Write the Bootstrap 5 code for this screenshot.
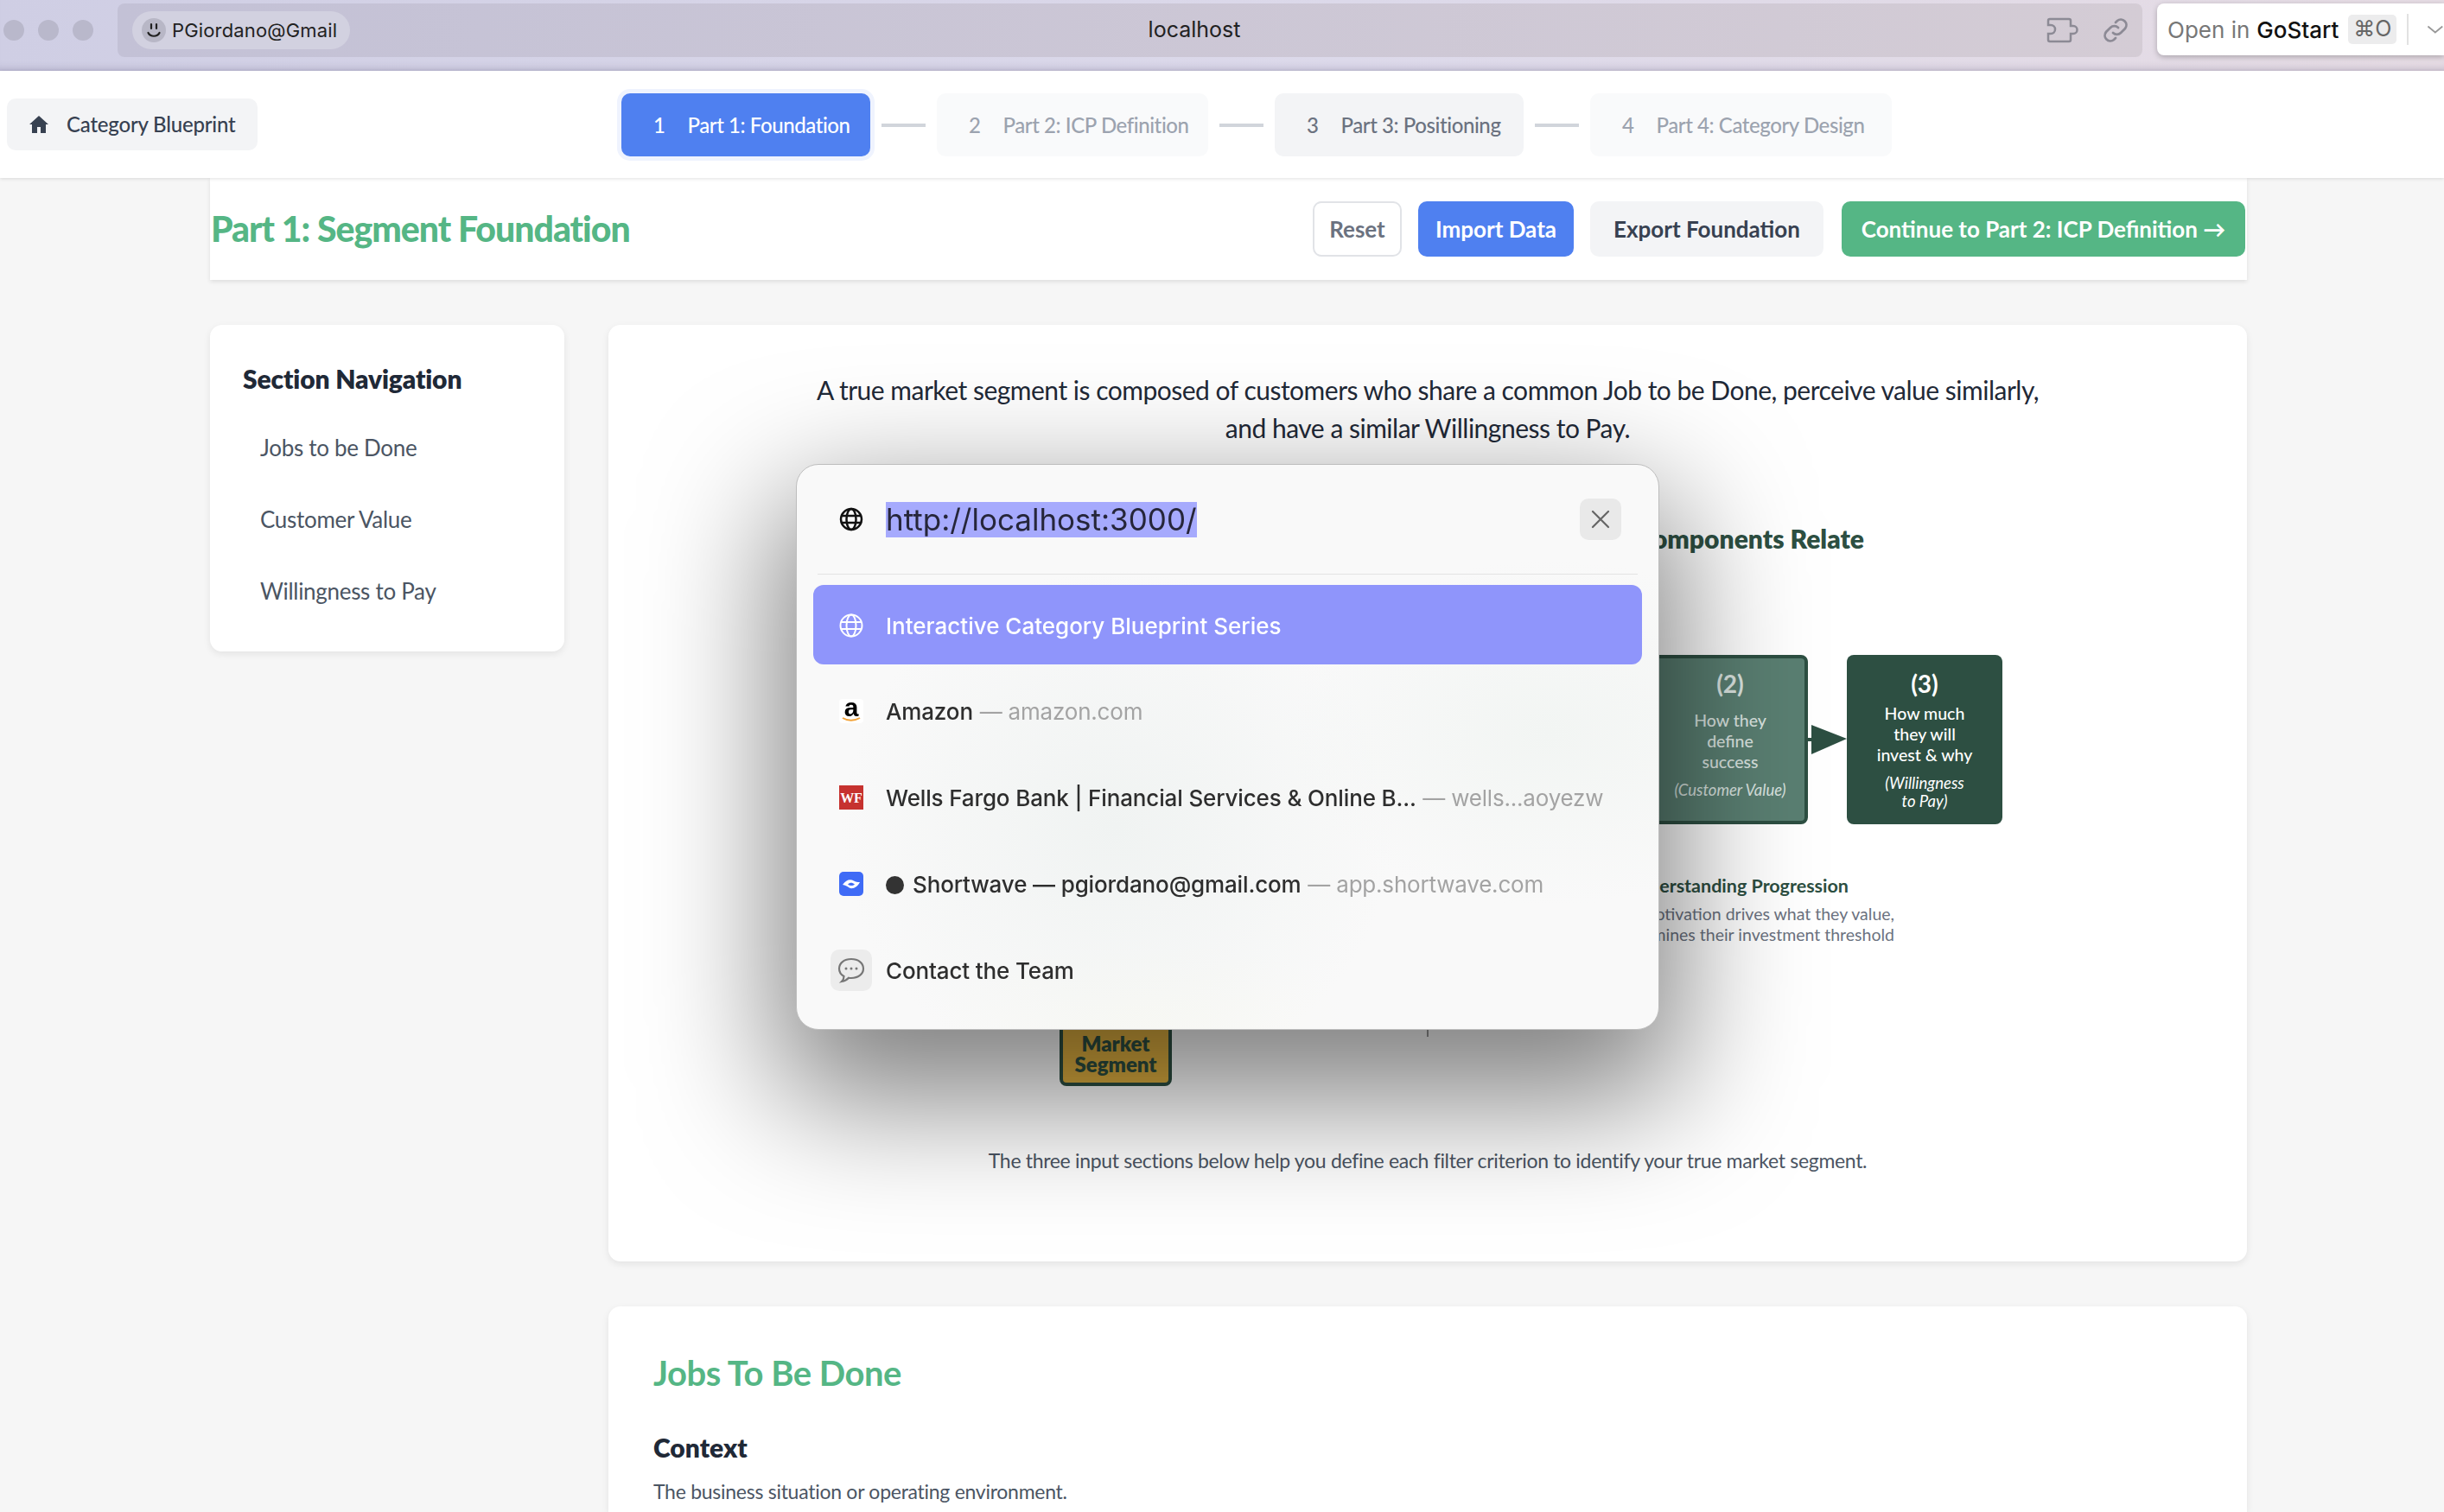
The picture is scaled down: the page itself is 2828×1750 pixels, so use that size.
<!DOCTYPE html>
<html lang="en">
<head>
<meta charset="UTF-8">
<title>Interactive Category Blueprint Series</title>
<link href="https://cdn.jsdelivr.net/npm/bootstrap@5.3.0/dist/css/bootstrap.min.css" rel="stylesheet">
<style>
html, body { height: 100%; overflow: hidden; }
body { background: #f6f6f6; font-family: Lato, "Open Sans", sans-serif; color: #1f2937; }

/* browser chrome */
.chrome-bar { height: 82px; background: linear-gradient(90deg, #cfcee4 0%, #dcd9ea 55%, #e6dce4 100%); box-shadow: inset 0 -10px 8px -8px rgba(80,70,110,.25); padding: 4px 0 0 4px; }
.light-dot { width: 24px; height: 24px; background: #b9b8cb; border-radius: 50%; }
.light-row { gap: 16px; width: 132px; height: 62px; }
.addr-bar { width: 2343px; height: 62px; background: linear-gradient(90deg, #c3c1d6, #d4ccd5); border-radius: 8px; font-family: Inter, sans-serif; padding: 0 15px 0 17px; }
.profile-pill { width: 252px; height: 44px; background: #d2d1e0; border-radius: 22px; font-size: 22px; letter-spacing: .15px; color: #222; padding-left: 11px; gap: 7px; flex: none; }
.smile-chip { width: 28px; height: 28px; border-radius: 50%; background: #b8b7c6; }
.addr-host { flex: 1; text-align: center; font-size: 25px; color: #222; padding-right: 9px; }
.open-box { width: 332px; height: 60px; margin-left: 17px; background: #fff; border-radius: 8px 0 0 8px; box-shadow: 0 2px 6px rgba(0,0,0,.25); font-family: Inter, sans-serif; font-size: 26px; color: #777; padding-left: 12px; overflow: hidden; }
.open-box b { color: #111; font-weight: 500; margin-left: 8px; }
.key-chip { background: #ececed; border-radius: 5px; height: 34px; width: 56px; margin-left: 11px; font-size: 25px; color: #666; flex: none; }
.open-sep { width: 2px; height: 36px; background: #e2e2e2; margin: 0 21px 0 12px; flex: none; }

/* step nav */
.step-head { height: 124px; background: #fff; box-shadow: 0 1px 4px rgba(0,0,0,.12); position: relative; z-index: 2; }
.home-chip { position: absolute; left: 8px; top: 32px; width: 290px; height: 60px; background: #f3f4f6; border-radius: 10px; color: #374151; font-size: 24px; font-weight: 500; padding-left: 26px; gap: 21px; letter-spacing: -.2px; }
.step-row { padding: 26px 0 0 719px; }
.step-chip { height: 73px; background: #f9fafb; border-radius: 10px; font-size: 24px; color: #9ca3af; padding-left: 37px; gap: 26px; font-weight: 500; letter-spacing: -.42px; flex: none; }
.step-chip.on { background: #4f80f0; color: #fff; box-shadow: 0 0 0 5px #eff3fe; }
.step-chip.cur { background: #f3f4f6; color: #6b7280; }
.step-link { width: 51px; height: 4px; background: #d1d5db; margin: 0 13px; align-self: center; }

/* page */
.page-wrap { width: 2357px; margin-left: 243px; }
.title-bar { height: 118px; background: #fff; box-shadow: 0 2px 5px rgba(0,0,0,.1); padding: 0 2px 0 1px; }
.page-title { font-size: 41px; font-weight: 900; color: #55b685; margin: 0; letter-spacing: -1px; }
.act-btn { height: 64px; border-radius: 10px; font-size: 26px; font-weight: 700; border: 0; padding: 0; }
.act-reset { width: 103px; background: #fff; border: 2px solid #e1e3e7; color: #6b7280; margin-right: 19px; }
.act-import { width: 180px; background: #4f80f0; color: #fff; margin-right: 19px; }
.act-export { width: 270px; background: #f3f4f6; color: #374151; margin-right: 21px; }
.act-next { width: 467px; background: #55b685; color: #fff; }
.panel-box { background: #fff; border-radius: 14px; box-shadow: 0 3px 8px rgba(0,0,0,.08); }
.body-row { padding-top: 52px; gap: 51px; }
.side-box { width: 410px; height: 378px; padding: 44px 38px; }
.side-title { font-size: 30px; font-weight: 800; color: #1f2937; line-height: 36px; margin-bottom: 35px; letter-spacing: -.15px; }
.side-item { font-size: 26px; color: #4b5563; padding-left: 20px; height: 83px; line-height: 54px; letter-spacing: -.3px; }
.main-col { width: 1896px; }
.intro-box { height: 1084px; position: relative; padding-top: 53px; }
.intro-text { width: 1440px; margin: 0 auto; text-align: center; font-size: 30px; line-height: 44px; color: #1f2937; letter-spacing: -.5px; }

/* diagram */
.dia-title { position: absolute; right: 443px; top: 225px; font-size: 30px; font-weight: 800; color: #2d4f42; white-space: nowrap; }
.dia-node { position: absolute; top: 382px; width: 180px; height: 196px; border-radius: 8px; text-align: center; display: flex; flex-direction: column; align-items: center; font-size: 19.500px; font-weight: 500; line-height: 24px; padding-top: 18px; }
.dia-node b { font-size: 28px; line-height: 30px; margin-bottom: 8px; }
.dia-node i { font-size: 18.500px; line-height: 21px; margin-top: 10px; font-weight: 400; }
.node-two { left: 1208px; background: #5a7f72; border: 4px solid #2d4f42; color: #dbe4e0; padding-top: 14px; }
.node-two span { margin-top: 8px; }
.node-three { left: 1433px; background: #2d4f42; color: #fff; }
.dia-arrow { position: absolute; left: 1388px; top: 463px; }
.dia-prog { position: absolute; right: 408px; top: 634px; width: 900px; text-align: right; }
.dia-prog h6 { font-size: 21.500px; font-weight: 700; color: #2d4f42; margin: 0 53px 6px 0; line-height: 30px; }
.dia-prog p { font-size: 19.500px; line-height: 24px; color: #6b7280; margin: 0; }
.seg-node { position: absolute; left: 522px; top: 740px; width: 130px; height: 141px; background: #e0b040; border: 4px solid #2d4f42; border-radius: 8px; color: #2d4f42; font-weight: 800; font-size: 24px; line-height: 24px; text-align: center; display: flex; align-items: flex-end; justify-content: center; padding-bottom: 9px; }
.dia-tick { position: absolute; left: 947px; top: 816px; width: 2px; height: 8px; background: #999; }
.dia-caption { position: absolute; left: 0; right: 0; top: 950px; text-align: center; font-size: 23px; color: #4b5563; line-height: 34px; letter-spacing: -.32px; }

.jobs-box { margin-top: 52px; height: 238px; padding: 52px 52px 0; border-radius: 14px 14px 0 0; }
.jobs-title { font-size: 40px; font-weight: 700; color: #55b685; line-height: 50px; margin: 0 0 43px; letter-spacing: -.5px; }
.jobs-sub { font-size: 30px; font-weight: 800; color: #1f2937; line-height: 36px; margin-bottom: 18px; }
.jobs-text { font-size: 23px; color: #4b5563; line-height: 30px; letter-spacing: -.27px; }

/* quick-open overlay */
.quick-box { position: fixed; left: 921px; top: 537px; width: 999px; height: 655px; z-index: 10; border-radius: 26px; border: 1px solid #bdbdbd; box-shadow: 0 60px 150px 20px rgba(0,0,0,.5); font-family: Inter, sans-serif; padding: 0 19px;
  background: radial-gradient(300px 200px at 870px 310px, #f2f5f3, transparent), radial-gradient(320px 300px at 370px 420px, #f0f3f2, transparent), radial-gradient(240px 90px at 400px 640px, #f9f9f4, transparent), #f9f9f9; }
.quick-input { height: 127px; margin: 0 5px; border-bottom: 1px solid #e3e3e3; padding-left: 25px; gap: 26px; }
.url-sel { background: #a6aafd; color: #26263a; font-size: 35px; line-height: 41px; font-weight: 400; }
.close-chip { width: 48px; height: 48px; background: #e9e9e9; border-radius: 10px; margin-left: auto; margin-right: 19px; }
.quick-list { padding-top: 12px; }
.quick-row { height: 100px; padding: 0 0 2px 30px; gap: 26px; font-size: 26px; font-weight: 500; color: #2e2e2e; white-space: nowrap; letter-spacing: -.14px; }
.quick-row.sel { height: 92px; margin-bottom: 5px; background: #8f95fb; border-radius: 12px; color: #fff; padding: 2px 0 0 30px; letter-spacing: 0; }
.row-ico { width: 28px; height: 28px; flex: none; overflow: visible; }
.row-sub { color: #a3a3a3; font-weight: 400; margin-left: 1px; letter-spacing: -.2px; }
.dot-mark { display: inline-block; width: 21px; height: 21px; background: #333; border-radius: 50%; margin-right: 10px; vertical-align: -2px; }
.chat-chip { width: 48px; height: 48px; background: #ececec; border-radius: 10px; margin: 0 -10px; flex: none; }
</style>
</head>
<body>

<div class="chrome-bar d-flex">
    <div class="light-row d-flex align-items-center">
        <span class="light-dot"></span><span class="light-dot"></span><span class="light-dot"></span>
    </div>
    <div class="addr-bar d-flex align-items-center">
        <div class="profile-pill d-flex align-items-center">
            <span class="smile-chip d-flex align-items-center justify-content-center">
                <svg width="20" height="20" viewBox="0 0 20 20" fill="none" stroke="#222" stroke-width="2.200" stroke-linecap="round"><path d="M7 3v5M13 3v5M3.500 13c2.500 5 10.500 5 13 0"/></svg>
            </span>
            PGiordano@Gmail
        </div>
        <div class="addr-host">localhost</div>
        <svg width="40" height="32" viewBox="0 0 40 32" fill="none" stroke="#8c8a95" stroke-width="2.500"><path d="M2 10V5a2 2 0 0 1 2-2h22a2 2 0 0 1 2 2v6h3a4.500 4.500 0 0 1 0 9h-3v7a2 2 0 0 1-2 2H4a2 2 0 0 1-2-2v-7h3a4.500 4.500 0 0 0 0-10z"/></svg>
        <svg class="ms-4" width="32" height="32" viewBox="0 0 32 32" fill="none" stroke="#8c8a95" stroke-width="2.800" stroke-linecap="round"><path d="M13 19a6.500 6.500 0 0 0 9 0l5-5a6.400 6.400 0 0 0-9-9l-2 2"/><path d="M19 13a6.500 6.500 0 0 0-9 0l-5 5a6.400 6.400 0 0 0 9 9l2-2"/></svg>
    </div>
    <div class="open-box d-flex align-items-center text-nowrap">
        Open in<b>GoStart</b><span class="key-chip d-flex align-items-center justify-content-center">⌘O</span><span class="open-sep"></span>
        <svg class="flex-none" width="28" height="14" viewBox="0 0 28 14" fill="none" stroke="#999" stroke-width="2.500"><path d="M2 2l12 10L26 2"/></svg>
    </div>
</div>

<div class="step-head">
    <div class="home-chip d-flex align-items-center">
        <svg width="22" height="20" viewBox="0 0 22 20" fill="#374151"><path d="M11 0 0 10h3v10h6v-7h4v7h6V10h3z"/></svg>
        Category Blueprint
    </div>
    <div class="step-row d-flex align-items-start">
        <div class="step-chip on d-flex align-items-center" style="width: 288px"><span>1</span><span>Part 1: Foundation</span></div>
        <span class="step-link"></span>
        <div class="step-chip d-flex align-items-center" style="width: 314px"><span>2</span><span>Part 2: ICP Definition</span></div>
        <span class="step-link"></span>
        <div class="step-chip cur d-flex align-items-center" style="width: 288px"><span>3</span><span>Part 3: Positioning</span></div>
        <span class="step-link"></span>
        <div class="step-chip d-flex align-items-center" style="width: 349px"><span>4</span><span>Part 4: Category Design</span></div>
    </div>
</div>

<div class="page-wrap">
    <div class="title-bar d-flex align-items-center justify-content-between">
        <h1 class="page-title">Part 1: Segment Foundation</h1>
        <div class="d-flex">
            <button class="act-btn act-reset">Reset</button>
            <button class="act-btn act-import">Import Data</button>
            <button class="act-btn act-export">Export Foundation</button>
            <button class="act-btn act-next">Continue to Part 2: ICP Definition →</button>
        </div>
    </div>

    <div class="body-row d-flex align-items-start">
        <div class="panel-box side-box">
            <div class="side-title">Section Navigation</div>
            <div class="side-item">Jobs to be Done</div>
            <div class="side-item">Customer Value</div>
            <div class="side-item">Willingness to Pay</div>
        </div>
        <div class="main-col">
            <div class="panel-box intro-box">
                <p class="intro-text">A true market segment is composed of customers who share a common Job to be Done, perceive value similarly, and have a similar Willingness to Pay.</p>
                <div class="dia-title">How the Three Components Relate</div>
                <div class="dia-node node-two"><b>(2)</b><span>How they<br>define<br>success</span><i>(Customer Value)</i></div>
                <svg class="dia-arrow" width="45" height="34" viewBox="0 0 45 34" fill="#2d4f42"><rect x="0" y="15" width="6" height="4"/><path d="M4 0 45 16 4 34z"/></svg>
                <div class="dia-node node-three"><b>(3)</b><span>How much<br>they will<br>invest &amp; why</span><i>(Willingness<br>to Pay)</i></div>
                <div class="dia-prog">
                    <h6>Understanding Progression</h6>
                    <p>A customer's motivation drives what they value,<br>which in turn determines their investment threshold</p>
                </div>
                <div class="seg-node">Market<br>Segment</div>
                <span class="dia-tick"></span>
                <div class="dia-caption">The three input sections below help you define each filter criterion to identify your true market segment.</div>
            </div>
            <div class="panel-box jobs-box">
                <h2 class="jobs-title">Jobs To Be Done</h2>
                <div class="jobs-sub">Context</div>
                <div class="jobs-text">The business situation or operating environment.</div>
            </div>
        </div>
    </div>
</div>

<div class="quick-box">
    <div class="quick-input d-flex align-items-center">
        <svg class="row-ico" viewBox="0 0 28 28" fill="none" stroke="#111" stroke-width="2.500"><circle cx="14" cy="14" r="12"/><ellipse cx="14" cy="14" rx="5.500" ry="12"/><path d="M2 10h24M2 18h24"/></svg>
        <span class="url-sel">http://localhost:3000/</span>
        <span class="close-chip d-flex align-items-center justify-content-center">
            <svg width="22" height="22" viewBox="0 0 22 22" stroke="#666" stroke-width="2.200" stroke-linecap="round"><path d="M2 2l18 18M20 2 2 20"/></svg>
        </span>
    </div>
    <div class="quick-list">
        <div class="quick-row sel d-flex align-items-center">
            <svg class="row-ico" viewBox="0 0 28 28" fill="none" stroke="#fff" stroke-width="2"><circle cx="14" cy="14" r="12.500"/><ellipse cx="14" cy="14" rx="5.500" ry="12.500"/><path d="M2 10h24M2 18h24"/></svg>
            Interactive Category Blueprint Series
        </div>
        <div class="quick-row d-flex align-items-center">
            <svg class="row-ico" viewBox="0 0 28 28"><rect width="28" height="28" rx="4" fill="#fff"/><text x="14" y="20" text-anchor="middle" font-family="Liberation Sans" font-weight="700" font-size="30" fill="#000">a</text><path d="M4 22c5.500 3.500 14 3.500 20 0" fill="none" stroke="#f2a33a" stroke-width="2"/></svg>
            <span>Amazon <span class="row-sub">— amazon.com</span></span>
        </div>
        <div class="quick-row d-flex align-items-center">
            <svg class="row-ico" viewBox="0 0 28 28"><rect width="28" height="28" fill="#c6322f"/><text x="14" y="19.500" text-anchor="middle" font-family="Liberation Serif" font-weight="700" font-size="16" fill="#fff">WF</text></svg>
            <span>Wells Fargo Bank | Financial Services &amp; Online B... <span class="row-sub">— wells...aoyezw</span></span>
        </div>
        <div class="quick-row d-flex align-items-center">
            <svg class="row-ico" viewBox="0 0 28 28"><rect width="28" height="28" rx="5" fill="#3f6bf6"/><path d="M4 15C8 9 13 8 17 10.500 19 11.500 21 12 24 12 21 18 15 21 11 18 9 16.500 7 15.500 4 15z" fill="#fff"/><path d="M10 14.500c2.500-2.500 5-2.500 8 0-2.500 2-5.500 2-8 0z" fill="#3f6bf6"/></svg>
            <span><span class="dot-mark"></span>Shortwave — pgiordano@gmail.com <span class="row-sub">— app.shortwave.com</span></span>
        </div>
        <div class="quick-row d-flex align-items-center">
            <span class="chat-chip d-flex align-items-center justify-content-center">
                <svg width="32" height="30" viewBox="0 0 32 30" fill="none" stroke="#777" stroke-width="2.200"><path d="M16 2c8 0 14 4.500 14 11s-6 11-14 11c-1 0-2 0-3-.3C11 26 8 27.500 5 28c1.500-1.500 2.500-3.500 2.500-6C4 20 2 17 2 13 2 6.500 8 2 16 2z"/><circle cx="10" cy="13" r="1.500" fill="#777" stroke="none"/><circle cx="16" cy="13" r="1.500" fill="#777" stroke="none"/><circle cx="22" cy="13" r="1.500" fill="#777" stroke="none"/></svg>
            </span>
            Contact the Team
        </div>
    </div>
</div>

<script src="https://cdn.jsdelivr.net/npm/bootstrap@5.3.0/dist/js/bootstrap.bundle.min.js"></script>
</body>
</html>
